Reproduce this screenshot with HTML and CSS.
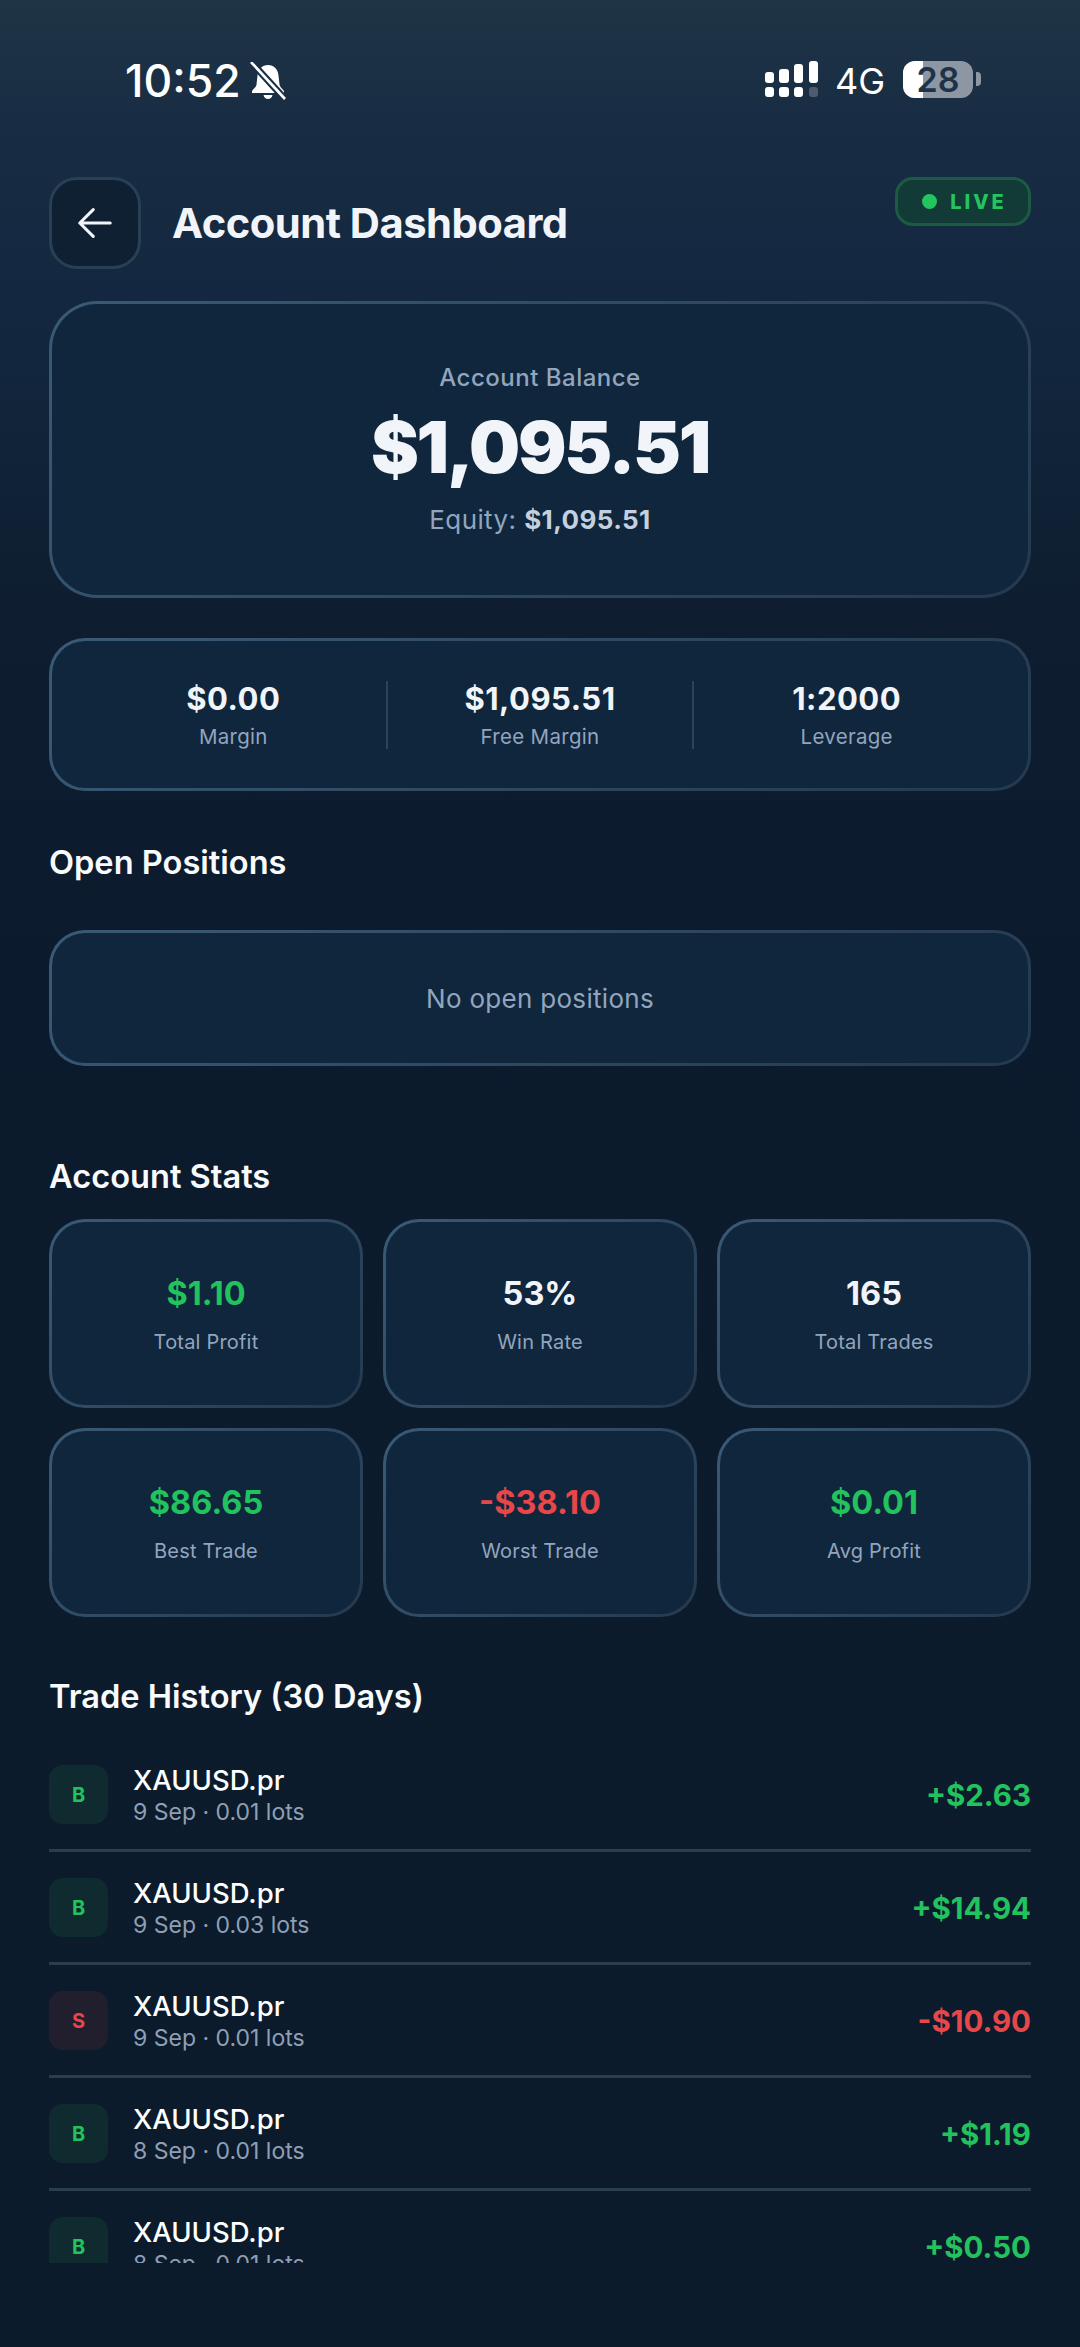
FILE: index.html
```html
<!DOCTYPE html>
<html lang="en">
<head>
    <meta charset="UTF-8">
    <meta name="viewport" content="width=device-width, initial-scale=1.0">
    <title>Account Dashboard</title>
    <link rel="stylesheet" href="styles.css">
</head>
<body>
    <div class="status">
        <div class="status-left">
            <span class="clock">10:52</span>
            <svg class="bell" width="36" height="38" viewBox="0 0 36 38">
                <path fill="#fff" d="M18 3c6 0 10 4.500 10.500 10.500l1 9c.3 2.500 2.500 4 4.500 6.500v2H2v-2c2-2.500 4.200-4 4.500-6.500l1-9C8 7.500 12 3 18 3z"/>
                <path fill="#fff" d="M13.500 33h9c-.5 2.600-2.300 4-4.500 4s-4-1.400-4.500-4z"/>
                <path stroke="#1b3044" stroke-width="7" d="M2 1l32 35"/>
                <path stroke="#fff" stroke-width="2.600" d="M1 0l34 37"/>
            </svg>
        </div>
        <div class="status-right">
            <svg class="signal" width="53" height="36" viewBox="0 0 53 36">
                <g fill="#fff">
                    <rect x="0" y="11" width="9" height="11" rx="3"/>
                    <rect x="14" y="8" width="10" height="14" rx="3"/>
                    <rect x="29" y="3" width="9" height="19" rx="3"/>
                    <rect x="44" y="0" width="9" height="22" rx="3"/>
                    <rect x="0" y="26" width="9" height="10" rx="3"/>
                    <rect x="14" y="26" width="10" height="10" rx="3"/>
                    <rect x="29" y="26" width="9" height="10" rx="3"/>
                </g>
                <rect x="44" y="26" width="9" height="10" rx="3" fill="#4d5c6e"/>
            </svg>
            <span class="net">4G</span>
            <div class="battery">
                <span class="battery-fill"></span>
                <span class="battery-num">28</span>
            </div>
            <span class="battery-nib"></span>
        </div>
    </div>

    <div class="page">
        <div class="head">
            <button class="back">
                <svg width="34" height="32" viewBox="0 0 38 34" fill="none" stroke="#f1f5f9" stroke-width="3.400" stroke-linecap="round" stroke-linejoin="round">
                    <path d="M17 2L2 17l15 15M2 17h34"/>
                </svg>
            </button>
            <h1 class="title">Account Dashboard</h1>
            <div class="live"><i class="dot"></i>LIVE</div>
        </div>

        <div class="card hero">
            <div class="hero-label">Account Balance</div>
            <div class="hero-value">$1,095.51</div>
            <div class="hero-sub">Equity: <b>$1,095.51</b></div>
        </div>

        <div class="card margins">
            <div class="margin-item">
                <div class="margin-value">$0.00</div>
                <div class="margin-label">Margin</div>
            </div>
            <div class="margin-item">
                <div class="margin-value">$1,095.51</div>
                <div class="margin-label">Free Margin</div>
            </div>
            <div class="margin-item">
                <div class="margin-value">1:2000</div>
                <div class="margin-label">Leverage</div>
            </div>
        </div>

        <h2 class="section section-open">Open Positions</h2>
        <div class="card empty">No open positions</div>

        <h2 class="section section-stats">Account Stats</h2>
        <div class="stats">
            <div class="card stat"><div class="stat-value green">$1.10</div><div class="stat-label">Total Profit</div></div>
            <div class="card stat"><div class="stat-value">53%</div><div class="stat-label">Win Rate</div></div>
            <div class="card stat"><div class="stat-value">165</div><div class="stat-label">Total Trades</div></div>
            <div class="card stat"><div class="stat-value green">$86.65</div><div class="stat-label">Best Trade</div></div>
            <div class="card stat"><div class="stat-value red">-$38.10</div><div class="stat-label">Worst Trade</div></div>
            <div class="card stat"><div class="stat-value green">$0.01</div><div class="stat-label">Avg Profit</div></div>
        </div>

        <h2 class="section section-history">Trade History (30 Days)</h2>
        <div class="trades">
            <div class="trade">
                <div class="side buy">B</div>
                <div class="trade-info"><div class="symbol">XAUUSD.pr</div><div class="meta">9 Sep · 0.01 lots</div></div>
                <div class="pnl green">+$2.63</div>
            </div>
            <div class="trade">
                <div class="side buy">B</div>
                <div class="trade-info"><div class="symbol">XAUUSD.pr</div><div class="meta">9 Sep · 0.03 lots</div></div>
                <div class="pnl green">+$14.94</div>
            </div>
            <div class="trade">
                <div class="side sell">S</div>
                <div class="trade-info"><div class="symbol">XAUUSD.pr</div><div class="meta">9 Sep · 0.01 lots</div></div>
                <div class="pnl red">-$10.90</div>
            </div>
            <div class="trade">
                <div class="side buy">B</div>
                <div class="trade-info"><div class="symbol">XAUUSD.pr</div><div class="meta">8 Sep · 0.01 lots</div></div>
                <div class="pnl green">+$1.19</div>
            </div>
            <div class="trade">
                <div class="side buy">B</div>
                <div class="trade-info"><div class="symbol">XAUUSD.pr</div><div class="meta">8 Sep · 0.01 lots</div></div>
                <div class="pnl green">+$0.50</div>
            </div>
        </div>
    </div>
</body>
</html>
```
FILE: styles.css
```css
*{
    box-sizing: border-box;
}
html,body{
    margin: 0;
    height: 2347px;
    overflow: hidden;
}
body{
    font-family: Inter, "Noto Sans", sans-serif;
    color: #f1f5f9;
    background: linear-gradient(180deg, #1f3445 0px, #182d43 120px, #132840 300px, #0e1e30 600px, #0b1b2d 1000px, #0c1b2c 2347px);
}
/* status bar */
.status{
    height: 177px;
    padding: 59px 99px 0 125px;
    display: flex;
    justify-content: space-between;
    align-items: flex-start;
}
.status-left,.status-right{
    display: flex;
    align-items: center;
    height: 40px;
}
.clock{
    font-size: 44.500px;
    font-weight: 500;
    color: #fff;
    line-height: 40px;
    margin-top: 4px;
}
.bell{
    margin-left: 9px;
    margin-top: 4px;
}
.signal{
    display: block;
    margin-right: 17px;
}
.net{
    font-size: 36px;
    color: #fff;
    line-height: 40px;
    margin-top: 4px;
    margin-right: 18px;
}
.battery{
    width: 70px;
    height: 37px;
    border-radius: 12px;
    background: #8d97a3;
    position: relative;
    text-align: center;
}
.battery-fill{
    position: absolute;
    left: 0;
    top: 0;
    bottom: 0;
    width: 20px;
    background: #fff;
    border-radius: 12px 0 0 12px;
}
.battery-num{
    position: relative;
    font-size: 34px;
    font-weight: 600;
    line-height: 37px;
    color: #1e3347;
}
.battery-nib{
    width: 5px;
    height: 14px;
    margin-left: 3px;
    border-radius: 0 4px 4px 0;
    background: #8d97a3;
}
/* page */
.page{
    padding: 0 49px;
}
.head{
    display: flex;
    height: 92px;
    margin-bottom: 32px;
    align-items: center;
}
.back{
    width: 92px;
    height: 92px;
    padding: 0;
    border: 3px solid #2b3f54;
    border-radius: 28px;
    background: #0f2033;
    display: flex;
    align-items: center;
    justify-content: center;
}
.title{
    margin: 0 0 0 31px;
    font-size: 41.700px;
    font-weight: 700;
    letter-spacing: -0.5px;
}
.live{
    margin-left: auto;
    align-self: flex-start;
    width: 136px;
    height: 49px;
    padding-left: 3px;
    border: 3px solid #1c5a44;
    border-radius: 18px;
    background: #123a36;
    color: #22c55e;
    font-size: 20px;
    font-weight: 800;
    letter-spacing: 3px;
    display: flex;
    align-items: center;
    justify-content: center;
    gap: 13px;
}
.dot{
    width: 15px;
    height: 15px;
    border-radius: 50%;
    background: #22c55e;
}
.card{
    border: 3px solid transparent;
    background: linear-gradient(#10263c, #10263c) padding-box, linear-gradient(135deg, #3a5a76, #24394e) border-box;
}
.hero{
    height: 297px;
    border-radius: 48px;
    text-align: center;
    padding-top: 58px;
}
.hero-label{
    font-size: 24px;
    font-weight: 500;
    letter-spacing: .5px;
    color: #92a5bf;
    line-height: 32px;
}
.hero-value{
    font-size: 72px;
    font-weight: 900;
    line-height: 88px;
    margin-top: 9px;
    letter-spacing: -2.300px;
}
.hero-sub{
    font-size: 26px;
    letter-spacing: .4px;
    color: #92a5bf;
    line-height: 36px;
    margin-top: 11px;
}
.hero-sub b{
    color: #c4d0df;
    font-weight: 700;
}
.margins{
    height: 153px;
    margin-top: 40px;
    padding: 0 29px;
    border-radius: 36px;
    display: flex;
    align-items: center;
}
.margin-item{
    flex: 1;
    text-align: center;
    height: 68px;
    border-left: 2px solid #2d4358;
}
.margin-item:first-child{
    border-left: 0;
}
.margin-value{
    font-size: 31px;
    font-weight: 700;
    line-height: 36px;
    letter-spacing: .5px;
}
.margin-label{
    font-size: 20.500px;
    letter-spacing: .3px;
    color: #92a5bf;
    line-height: 28px;
    margin-top: 6px;
}
.section{
    margin: 0;
    font-size: 32.600px;
    font-weight: 600;
    line-height: 40px;
    color: #f8fafc;
}
.section-open{
    margin-top: 51px;
}
.empty{
    margin-top: 48px;
    height: 136px;
    border-radius: 36px;
    display: flex;
    align-items: center;
    justify-content: center;
    font-size: 26px;
    letter-spacing: .3px;
    color: #92a5bf;
}
.section-stats{
    margin-top: 90px;
}
.stats{
    margin-top: 23px;
    display: grid;
    grid-template-columns: repeat(3, 1fr);
    gap: 20px;
}
.stat{
    height: 189px;
    border-radius: 36px;
    text-align: center;
    padding-top: 52px;
}
.stat-value{
    font-size: 32.500px;
    font-weight: 700;
    line-height: 40px;
}
.stat-label{
    font-size: 20px;
    letter-spacing: .2px;
    color: #92a5bf;
    line-height: 28px;
    margin-top: 14px;
}
.green{
    color: #22c25e;
}
.red{
    color: #e8474a;
}
.section-history{
    margin-top: 59px;
}
.trades{
    margin-top: 23px;
    height: 524px;
    overflow: hidden;
}
.trade{
    display: flex;
    align-items: center;
    height: 113px;
    padding: 26px 0 25px;
    border-bottom: 3px solid #2b3e50;
}
.side{
    width: 59px;
    height: 59px;
    border-radius: 14px;
    display: flex;
    align-items: center;
    justify-content: center;
    font-size: 20px;
    font-weight: 700;
}
.buy{
    background: #0f2b2f;
    color: #22c25e;
}
.sell{
    background: #211f2d;
    color: #e8474a;
}
.trade-info{
    margin-left: 25px;
}
.symbol{
    font-size: 27.500px;
    font-weight: 500;
    line-height: 34px;
    color: #fff;
}
.meta{
    font-size: 23px;
    color: #8f9fb4;
    line-height: 30px;
}
.pnl{
    margin-left: auto;
    font-size: 29.500px;
    font-weight: 700;
}
```
